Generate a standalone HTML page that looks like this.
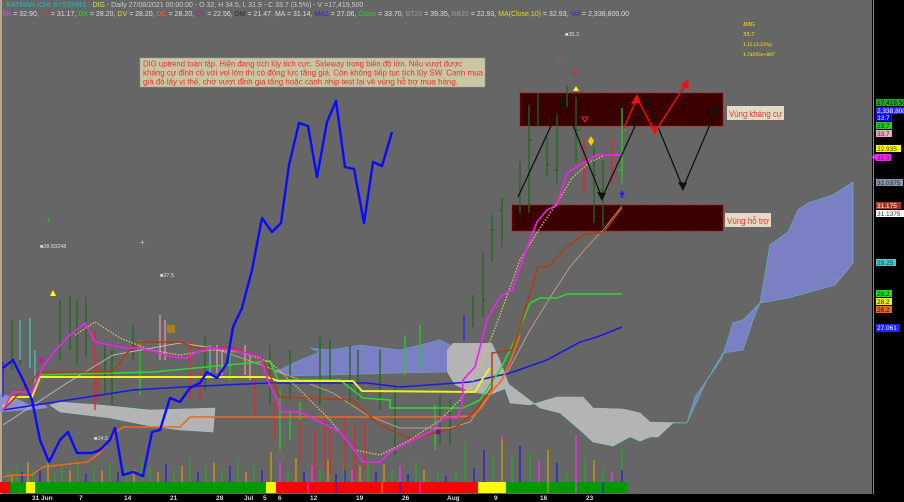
<!DOCTYPE html>
<html><head><meta charset="utf-8"><style>
html,body{margin:0;padding:0;background:#666;}
body{width:904px;height:502px;overflow:hidden;position:relative;font-family:"Liberation Sans",sans-serif;}
svg{position:absolute;left:0;top:0;}
.t{font-family:"Liberation Sans",sans-serif;}
</style></head><body>
<svg width="904" height="502" viewBox="0 0 904 502" xmlns="http://www.w3.org/2000/svg">
<rect x="0" y="0" width="904" height="502" fill="#666666"/>
<rect x="0" y="0" width="2" height="494" fill="#b8a888"/>
<rect x="872" y="0" width="32" height="502" fill="#000"/>
<line x1="873.5" y1="0" x2="873.5" y2="494" stroke="#888" stroke-width="1"/>
<rect x="0" y="494" width="904" height="8" fill="#000"/>

<!-- clouds -->
<polygon points="695,397 707,380 722,358 733,323 743,320 760,303 770,245 788,232 798,210 808,203 833,195 853,182 853,263 835,285 788,298 760,303 753,320 743,350 723,353 707,380 687,423" fill="#7b7fc4" stroke="#6ab" stroke-width="0.8"/>
<polygon points="502,380 510,403 530,405 557,397 583,397 593,408 623,409 640,413 650,422 687,423 673,423 658,437 650,437 640,441 630,437 613,446 593,442 580,430 560,413 540,408 503,380" fill="#b4b4b4" stroke="#8cc" stroke-width="0.6"/>
<polygon points="50,405 60,402 100,405 150,410 215,408 213,432 180,430 150,426 110,418 60,412" fill="#b4b4b4" stroke="#8cc" stroke-width="0.6"/>
<polygon points="275,372 300,360 320,352 310,348 330,350 360,345 400,350 440,340 450,345 450,372 400,373 330,375 290,376" fill="#7b7fc4" stroke="#6ab" stroke-width="0.6"/>
<polygon points="447,350 453,343 492,343 500,360 510,387 490,395 470,392 455,385 447,372" fill="#b4b4b4"/>
<polygon points="0,393 20,400 30,405 45,405 48,408 30,410 0,412" fill="#8d8fc8"/>

<!-- volume bars -->
<g stroke-width="1.4">
<line x1="8" y1="482" x2="8" y2="470" stroke="#2a2"/><line x1="12" y1="482" x2="12" y2="476" stroke="#c90"/>
<line x1="17" y1="482" x2="17" y2="466" stroke="#2a2"/><line x1="22" y1="482" x2="22" y2="472" stroke="#22c"/>
<line x1="28" y1="482" x2="28" y2="462" stroke="#c90"/><line x1="33" y1="482" x2="33" y2="470" stroke="#2a2"/>
<line x1="40" y1="482" x2="40" y2="468" stroke="#22c"/><line x1="48" y1="482" x2="48" y2="460" stroke="#c90"/>
<line x1="55" y1="482" x2="55" y2="472" stroke="#2a2"/><line x1="62" y1="482" x2="62" y2="466" stroke="#2a2"/>
<line x1="70" y1="482" x2="70" y2="470" stroke="#c90"/><line x1="78" y1="482" x2="78" y2="464" stroke="#2a2"/>
<line x1="86" y1="482" x2="86" y2="474" stroke="#22c"/><line x1="94" y1="482" x2="94" y2="468" stroke="#2a2"/>
<line x1="102" y1="482" x2="102" y2="470" stroke="#c90"/><line x1="110" y1="482" x2="110" y2="462" stroke="#2a2"/>
<line x1="118" y1="482" x2="118" y2="472" stroke="#22c"/><line x1="126" y1="482" x2="126" y2="466" stroke="#2a2"/>
<line x1="134" y1="482" x2="134" y2="470" stroke="#c90"/><line x1="142" y1="482" x2="142" y2="460" stroke="#2a2"/>
<line x1="150" y1="482" x2="150" y2="468" stroke="#2a2"/><line x1="158" y1="482" x2="158" y2="472" stroke="#c90"/>
<line x1="166" y1="482" x2="166" y2="464" stroke="#22c"/><line x1="174" y1="482" x2="174" y2="470" stroke="#2a2"/>
<line x1="182" y1="482" x2="182" y2="466" stroke="#c90"/><line x1="190" y1="482" x2="190" y2="458" stroke="#2a2"/>
<line x1="198" y1="482" x2="198" y2="472" stroke="#22c"/><line x1="206" y1="482" x2="206" y2="466" stroke="#2a2"/>
<line x1="214" y1="482" x2="214" y2="462" stroke="#c90"/><line x1="222" y1="482" x2="222" y2="470" stroke="#2a2"/>
<line x1="230" y1="482" x2="230" y2="466" stroke="#22c"/><line x1="238" y1="482" x2="238" y2="460" stroke="#2a2"/>
<line x1="246" y1="482" x2="246" y2="472" stroke="#c90"/><line x1="254" y1="482" x2="254" y2="466" stroke="#2a2"/>
<line x1="262" y1="482" x2="262" y2="470" stroke="#22c"/><line x1="271" y1="482" x2="271" y2="452" stroke="#c90"/>
<line x1="280" y1="482" x2="280" y2="462" stroke="#e3e"/><line x1="288" y1="482" x2="288" y2="470" stroke="#2a2"/>
<line x1="296" y1="482" x2="296" y2="458" stroke="#c90"/><line x1="304" y1="482" x2="304" y2="472" stroke="#22c"/>
<line x1="312" y1="482" x2="312" y2="466" stroke="#e3e"/><line x1="320" y1="482" x2="320" y2="470" stroke="#2a2"/>
<line x1="328" y1="482" x2="328" y2="460" stroke="#c90"/><line x1="336" y1="482" x2="336" y2="474" stroke="#22c"/>
<line x1="344" y1="482" x2="344" y2="462" stroke="#2a2"/><line x1="352" y1="482" x2="352" y2="470" stroke="#e3e"/>
<line x1="360" y1="482" x2="360" y2="466" stroke="#c90"/><line x1="368" y1="482" x2="368" y2="458" stroke="#2a2"/>
<line x1="376" y1="482" x2="376" y2="472" stroke="#22c"/><line x1="384" y1="482" x2="384" y2="464" stroke="#c90"/>
<line x1="392" y1="482" x2="392" y2="470" stroke="#2a2"/><line x1="400" y1="482" x2="400" y2="466" stroke="#e3e"/>
<line x1="408" y1="482" x2="408" y2="474" stroke="#22c"/><line x1="416" y1="482" x2="416" y2="462" stroke="#2a2"/>
<line x1="424" y1="482" x2="424" y2="470" stroke="#c90"/><line x1="428" y1="482" x2="428" y2="478" stroke="#2a2"/>
<line x1="438" y1="482" x2="438" y2="472" stroke="#2a2"/><line x1="446" y1="482" x2="446" y2="476" stroke="#22c"/>
<line x1="456" y1="482" x2="456" y2="472" stroke="#2a2"/><line x1="465" y1="482" x2="465" y2="444" stroke="#2a2"/>
<line x1="474" y1="482" x2="474" y2="468" stroke="#22c"/><line x1="484" y1="482" x2="484" y2="450" stroke="#22c"/>
<line x1="493" y1="482" x2="493" y2="457" stroke="#2a2"/><line x1="502" y1="482" x2="502" y2="437" stroke="#c90"/>
<line x1="502" y1="440" x2="502" y2="436" stroke="#e3e"/>
<line x1="512" y1="482" x2="512" y2="454" stroke="#2a2"/><line x1="520" y1="482" x2="520" y2="446" stroke="#22c"/>
<line x1="530" y1="482" x2="530" y2="454" stroke="#2a2"/><line x1="539" y1="482" x2="539" y2="461" stroke="#e3e"/>
<line x1="548" y1="482" x2="548" y2="450" stroke="#c90"/><line x1="557" y1="482" x2="557" y2="463" stroke="#22c"/>
<line x1="567" y1="482" x2="567" y2="473" stroke="#2a2"/><line x1="576" y1="482" x2="576" y2="436" stroke="#e3e"/>
<line x1="585" y1="482" x2="585" y2="460" stroke="#2a2"/><line x1="594" y1="482" x2="594" y2="460" stroke="#c90"/>
<line x1="603" y1="482" x2="603" y2="470" stroke="#2a2"/><line x1="612" y1="482" x2="612" y2="472" stroke="#e3e"/>
<line x1="622" y1="482" x2="622" y2="470" stroke="#22c"/><line x1="622" y1="470" x2="622" y2="450" stroke="#2a2"/>
</g>

<rect x="0" y="482" width="10" height="11" fill="#f00"/>
<rect x="10" y="482" width="16" height="11" fill="#090"/>
<rect x="26" y="482" width="9" height="11" fill="#ff0"/>
<rect x="35" y="482" width="231" height="11" fill="#090"/>
<rect x="266" y="482" width="10" height="11" fill="#ff0"/>
<rect x="276" y="482" width="202" height="11" fill="#f00"/>
<rect x="478" y="482" width="28" height="11" fill="#ff0"/>
<rect x="506" y="482" width="121" height="11" fill="#090"/>
<g stroke-width="1.2">
<line x1="308" y1="482" x2="308" y2="493" stroke="#e3e"/><line x1="336" y1="482" x2="336" y2="493" stroke="#22c"/>
<line x1="382" y1="482" x2="382" y2="493" stroke="#c90"/><line x1="400" y1="482" x2="400" y2="493" stroke="#22c"/>
<line x1="420" y1="482" x2="420" y2="493" stroke="#e3e"/><line x1="548" y1="482" x2="548" y2="493" stroke="#c90"/>
<line x1="576" y1="482" x2="576" y2="493" stroke="#e3e"/><line x1="603" y1="482" x2="603" y2="493" stroke="#22c"/>
</g>

<rect x="520" y="93" width="203" height="33" fill="#3a0000" stroke="#c00" stroke-width="0.8" stroke-dasharray="2,1"/>
<rect x="512" y="205" width="211" height="26" fill="#3a0000" stroke="#c00" stroke-width="0.8" stroke-dasharray="2,1"/>
<rect x="727" y="106" width="57" height="14" fill="#e2dcc4"/>
<text x="729" y="117" font-size="9" fill="#e33" class="t" textLength="53" lengthAdjust="spacingAndGlyphs">Vùng kháng cự</text>
<rect x="725" y="213" width="46" height="14" fill="#e2dcc4"/>
<text x="727" y="224" font-size="9" fill="#e33" class="t" textLength="42" lengthAdjust="spacingAndGlyphs">Vùng hỗ trợ</text>

<g stroke="#1c6a1c" stroke-width="1.3" fill="none">
<path d="M12 320v50M20 325v40M60 300v60M70 295v55M77 300v65M86 297v60M105 345v50M112 350v55M133 325v35M140 343v30M205 335v55M270 345v60M290 350v50M320 335v70M330 340v45M350 345v60M358 350v50M380 350v60M395 385v70M440 395v50M450 400v45M473 295v32M483 252v65M492 215v47M502 198v49M520 162v51M529 105v108M538 93v34M547 137v40M557 112v71M567 85v22M576 97v66M594 147v76M603 160v67"/>
<path d="M483 300h3M492 230h3M502 210h-3M529 140h3M547 165h3M557 170h-3M576 130h3M594 175h3M603 190h-3"/>
</g>
<g stroke="#2c2" stroke-width="1.3" fill="none">
<path d="M622 108v75M622 130h4M622 170h-4M140 340v55M405 335v40M420 325v45M280 390v60M300 402v40M435 405v45M230 345v35M290 410v30"/>
</g>
<g stroke="#e22" stroke-width="1.3" fill="none">
<path d="M584 138v55M612 138v44M95 330v80M98 360v40M190 340v60M200 370v30M255 375v40M325 420v50M300 420v40M315 430v50M330 430v45M345 415v55M355 425v55M365 420v50M275 400v40"/>
</g>
<g stroke="#4cc" stroke-width="1.2"><path d="M20 320v40M30 318v50M35 350v35M210 345v30"/></g>
<g stroke="#d9a" stroke-width="1.3"><path d="M160 315v45M165 320v40M217 345v28M222 350v25M245 345v30M250 355v25"/></g>
<g stroke="#22f" stroke-width="1.3"><path d="M464 315v25M3 362v35M345 470v12"/></g>

<polyline fill="none" stroke="#bbb" stroke-width="0.9" points="3,425 67,383 113,355 180,343 213,348"/>
<polyline fill="none" stroke="#c9a080" stroke-width="0.9" points="213,348 267,367 333,393 367,415 400,428 450,428 470,422 487,398 507,373 530,330 553,293 570,267 587,247 603,230 622,206"/>
<polyline fill="none" stroke="#1a1ae0" stroke-width="1.6" points="3,410 133,390 183,387 267,383 367,383 400,387 470,382 510,373 547,360 580,342 597,337 622,327"/>
<polyline fill="none" stroke="#f06a1a" stroke-width="1.6" points="3,477 13,475 32,475 43,467 87,462 100,453 115,433 123,427 180,427 190,417 450,417 473,416 482,407 493,390 502,380 512,357 520,335"/>
<polyline fill="none" stroke="#2ad82a" stroke-width="1.6" points="40,375 153,372 270,361 278,380 340,380 363,398 390,400 390,408 463,408 480,400 500,370 515,340 530,303 540,298 557,298 567,294 622,294"/>
<polyline fill="none" stroke="#f0f020" stroke-width="2" points="3,407 13,397 32,397 40,377 267,377 278,381 353,381 362,391 475,392 482,380 490,368"/>
<polyline fill="none" stroke="#b33c10" stroke-width="1.5" points="3,410 40,372 113,372 127,353 140,342 180,342 197,348 233,348 263,360 280,397 353,400 377,423 407,438 420,437 455,428 473,413 483,400 492,388 492,353 512,350 520,327 530,293 538,267 548,267 567,247 585,234 603,233 622,208"/>
<polyline fill="none" stroke="#d8c060" stroke-width="1.4" stroke-dasharray="1.5,1.5" points="75,335 95,322 120,338 150,350 180,355 210,350 240,352 270,362 300,390 330,420 355,450 380,455 410,440 440,420 460,400 477,375 500,315 520,260 540,228 557,203 572,178 590,162 605,155 622,155"/>
<polyline fill="none" stroke="#ee22ee" stroke-width="1.7" points="3,410 13,392 32,392 43,367 53,353 70,335 85,323 95,342 125,348 140,348 157,352 173,357 187,358 197,352 213,348 233,350 260,357 268,380 282,412 300,412 310,417 340,432 353,448 363,462 380,462 390,452 413,440 430,432 443,418 457,418 462,407 463,380 475,367 487,320 500,297 512,290 525,253 537,222 547,210 557,205 567,173 580,165 597,155 622,155"/>
<polyline fill="none" stroke="#0a0aff" stroke-width="2.4" stroke-linejoin="round" points="3,368 13,360 23,380 32,400 40,440 49,462 60,440 68,432 77,453 92,453 100,450 110,440 115,428 123,475 133,472 143,476 152,432 160,430 170,398 180,402 190,388 200,383 207,372 217,378 227,363 233,327 242,308 252,270 262,218 272,232 281,223 289,165 299,123 308,126 317,177 327,122 336,101 345,167 354,169 364,223 373,162 382,166 392,132"/>

<g fill="none" stroke="#111" stroke-width="1.3">
<polyline points="518,197 563,100 602,198 647,100 683,188 717,108"/>
</g>
<g fill="#111">
<polygon points="563,97 557,106 566,105"/><polygon points="602,201 597,192 606,193"/><polygon points="647,97 641,106 650,105"/><polygon points="683,191 678,182 687,183"/><polygon points="717,104 711,113 720,112"/>
</g>
<g fill="none" stroke="#f01010" stroke-width="1.4"><polyline points="623,130 637,98 655,132 687,82"/></g>
<g fill="#f01010"><polygon points="637,94 631,104 641,103"/><polygon points="655,135 650,126 659,127"/><polygon points="688,79 680,86 689,89"/></g>

<text x="40" y="248" font-size="5.5" fill="#ddd" class="t">■28.83248</text>
<text x="160" y="277" font-size="5.5" fill="#ddd" class="t">■27.5</text>
<text x="94" y="440" font-size="5.5" fill="#ddd" class="t">■24.5</text>
<text x="565" y="36" font-size="5.5" fill="#ddd" class="t">■35.3</text>
<text x="556" y="63" font-size="8" fill="#a4a" class="t">⊕</text>
<circle cx="575" cy="73" r="2" fill="#e22"/>
<polygon points="576,86 573,91 579,91" fill="#ff0"/>
<polygon points="582,117 588,117 585,122" fill="none" stroke="#e22"/>
<polygon points="591,136 588,141 591,146 594,141" fill="#fc0"/>
<polygon points="622,190 619,195 625,195" fill="#22f"/><rect x="621" y="194" width="2" height="4" fill="#22f"/>
<polygon points="53,290 50,296 56,296" fill="#ff0"/>
<rect x="167" y="325" width="8" height="8" fill="#c80" opacity="0.7"/>
<circle cx="41" cy="360" r="3" fill="#a2a"/>
<circle cx="438" cy="432" r="2.5" fill="#909"/>
<text x="46" y="222" font-size="8" fill="#2c2" class="t">+</text>
<text x="140" y="245" font-size="8" fill="#ccb" class="t">+</text>

<rect x="140" y="58" width="345" height="29" fill="#c9c7a3" stroke="#999" stroke-width="0.5"/>
<g font-size="8.5" fill="#e83030" class="t">
<text x="143" y="66.5" textLength="319" lengthAdjust="spacingAndGlyphs">DIG uptrend toàn tập. Hiện đang tích lũy tích cực. Sideway trong biên độ lớn. Nếu vượt được</text>
<text x="143" y="75.5" textLength="340" lengthAdjust="spacingAndGlyphs">kháng cự đỉnh cũ với vol lớn thì có động lực tăng giá. Còn không tiếp tục tích lũy SW. Canh mua</text>
<text x="143" y="84.5" textLength="315" lengthAdjust="spacingAndGlyphs">giá đỏ lấy vị thế, chờ vượt đỉnh gia tăng hoặc canh nhịp test lại về vùng hỗ trợ mua hàng.</text>
</g>

<text x="2" y="7" font-size="7" class="t" fill="#2bb"><tspan>- BATMAN  ICHI SYSTEMS - </tspan><tspan fill="#dd4">DIG</tspan><tspan fill="#ccc"> - Daily 27/08/2021 00:00:00 - O 32, H 34.5, L 31.9 - C 33.7 (3.5%) - V =17,419,500</tspan></text>
<text x="2" y="16" font-size="7" class="t" fill="#ddd"><tspan fill="#e4e">SK</tspan> = 32.90, <tspan fill="#c42">KJ</tspan> = 31.17, <tspan fill="#2d2">DX</tspan> = 28.20, <tspan fill="#dd2">DV</tspan> = 28.20, <tspan fill="#e62">DC</tspan> = 28.20, <tspan fill="#a2a">DT</tspan> = 22.56, <tspan fill="#233">DM</tspan> = 21.47, MA = 31.14, <tspan fill="#22f">MA1</tspan> = 27.06, <tspan fill="#2d2">Close</tspan> = 33.70, <tspan fill="#999">BT20</tspan> = 39.35, <tspan fill="#999">BB20</tspan> = 22.93, <tspan fill="#dd2">MA(Close,10)</tspan> = 32.93, <tspan fill="#22f">Vol</tspan> = 2,338,800.00</text>

<g font-family="Liberation Serif,serif" font-style="italic" font-weight="bold" fill="#e8d020">
<text x="743" y="26" font-size="6.5">DIG</text>
<text x="743" y="36" font-size="6.5">33.7</text>
<text x="743" y="46" font-size="5.5">1.15 (3.53%)</text>
<text x="743" y="56" font-size="5.5">1.74195e+007</text>
</g>

<g font-size="6.5" class="t">
<rect x="876" y="99" width="28" height="7" fill="#2a2"/><text x="877" y="105" fill="#111">17,419,50</text>
<rect x="876" y="107" width="28" height="7" fill="#22f"/><text x="877" y="113" fill="#fff">2,338,800</text>
<rect x="876" y="114" width="16" height="7" fill="#00f"/><text x="877" y="120" fill="#fff">33.7</text>
<rect x="876" y="122" width="16" height="7" fill="#2c2"/><text x="877" y="128" fill="#111">33.7</text>
<rect x="876" y="130" width="16" height="7" fill="#eab"/><text x="877" y="136" fill="#333">33.7</text>
<rect x="876" y="145" width="25" height="7" fill="#ff0"/><text x="877" y="151" fill="#333">32.935</text>
<polygon points="871,157 876,154 876,160" fill="#f2f"/><rect x="876" y="154" width="15" height="7" fill="#f2f"/><text x="877" y="160" fill="#333">32.9</text>
<rect x="876" y="179" width="27" height="7" fill="#89a"/><text x="877" y="185" fill="#223">32.0375</text>
<rect x="876" y="202" width="25" height="7" fill="#a32"/><text x="877" y="208" fill="#fff">31.175</text>
<rect x="876" y="210" width="28" height="7" fill="#fff"/><text x="877" y="216" fill="#333">31.1375</text>
<rect x="876" y="259" width="20" height="7" fill="#4cc"/><text x="877" y="265" fill="#233">29.25</text>
<rect x="876" y="290" width="16" height="7" fill="#2d2"/><text x="877" y="296" fill="#111">28.2</text>
<rect x="876" y="298" width="16" height="7" fill="#ee2"/><text x="877" y="304" fill="#111">28.2</text>
<rect x="876" y="306" width="16" height="7" fill="#e62"/><text x="877" y="312" fill="#111">28.2</text>
<rect x="876" y="324" width="24" height="8" fill="#22f"/><text x="877" y="330" fill="#fff">27.061</text>
</g>

<g font-size="6.5" fill="#ddd" class="t" font-weight="bold">
<text x="32" y="500">31</text><text x="41" y="500">Jun</text><text x="79" y="500">7</text><text x="124" y="500">14</text><text x="170" y="500">21</text><text x="216" y="500">28</text><text x="244" y="500">Jul</text><text x="263" y="500">5</text><text x="278" y="500">6</text><text x="310" y="500">12</text><text x="356" y="500">19</text><text x="402" y="500">26</text><text x="447" y="500">Aug</text><text x="494" y="500">9</text><text x="540" y="500">16</text><text x="586" y="500">23</text>
</g>
</svg>
</body></html>
